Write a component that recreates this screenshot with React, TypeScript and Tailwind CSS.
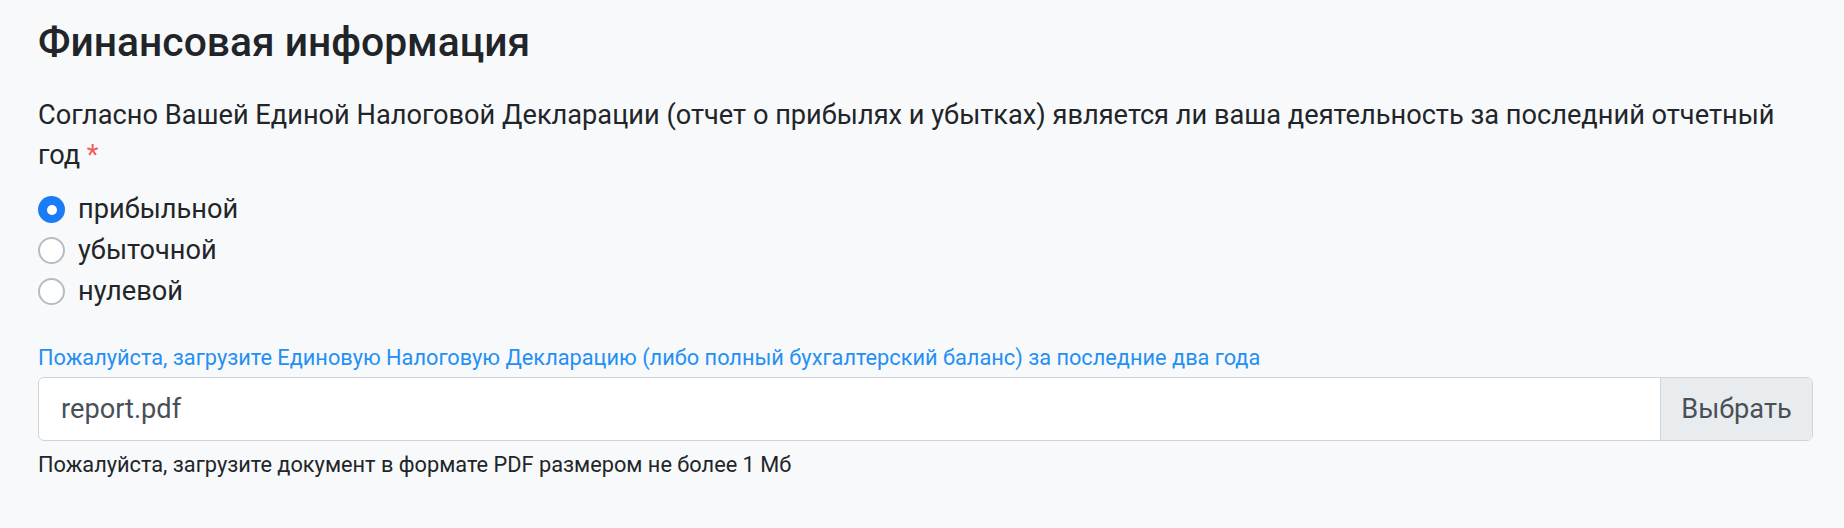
import React from "react";

function Radio({ checked, label }: { checked?: boolean; label: string }) {
  return (
    <label className="flex h-[41px] items-center gap-[13px]">
      {checked ? (
        <span className="flex h-[27px] w-[27px] items-center justify-center rounded-full bg-[#1a7df7]">
          <span className="h-[10px] w-[10px] rounded-full bg-white" />
        </span>
      ) : (
        <span className="h-[27px] w-[27px] rounded-full border-[2px] border-[#b5bcc4] bg-white" />
      )}
      <span className="text-[27.2px] leading-[41px] text-[#212529]">{label}</span>
    </label>
  );
}

export default function App() {
  return (
    <div
      className="min-h-screen bg-[#f8f9fa] pl-[38px] pr-[31px] pt-[18px]"
      style={{ fontFamily: "Roboto, 'Noto Sans', sans-serif" }}
    >
      <h2 className="text-[40.8px] font-medium leading-[48px] text-[#212529]">
        Финансовая информация
      </h2>
      <p className="mt-[29px] text-[27.2px] leading-[40px] text-[#212529]">
        <span className="whitespace-nowrap">
          Согласно Вашей Единой Налоговой Декларации (отчет о прибылях и убытках) является ли ваша деятельность за последний отчетный
        </span>
        <br />
        год <span className="text-[#f55a5a]">*</span>
      </p>
      <div className="mt-[14px] flex flex-col">
        <Radio checked label="прибыльной" />
        <Radio label="убыточной" />
        <Radio label="нулевой" />
      </div>
      <div className="mt-[31px] text-[21.76px] leading-[30px] text-[#2590f4]">
        Пожалуйста, загрузите Единовую Налоговую Декларацию (либо полный бухгалтерский баланс) за последние два года
      </div>
      <div className="mt-[4px] flex h-[64px] overflow-hidden rounded-[6px] border-[1.5px] border-[#ced4da] bg-white">
        <div className="flex flex-1 items-center pl-[22px] text-[27.2px] text-[#495057]">report.pdf</div>
        <div className="flex w-[152px] items-center justify-center border-l-[1.5px] border-[#ced4da] bg-[#e9ecef] text-[27.2px] text-[#495057]">
          Выбрать
        </div>
      </div>
      <div className="mt-[9px] text-[21.76px] leading-[30px] text-[#212529]">
        Пожалуйста, загрузите документ в формате PDF размером не более 1 Мб
      </div>
    </div>
  );
}
